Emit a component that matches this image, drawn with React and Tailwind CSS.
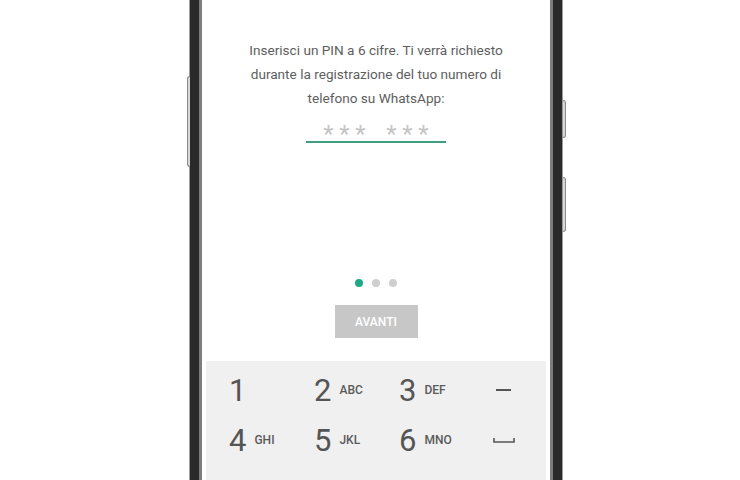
import React from 'react';

const keys = [
  { d: '1', l: '' },
  { d: '2', l: 'ABC' },
  { d: '3', l: 'DEF' },
  { special: 'dash' },
  { d: '4', l: 'GHI' },
  { d: '5', l: 'JKL' },
  { d: '6', l: 'MNO' },
  { special: 'space' },
];

function Key({ k }) {
  if (k.special === 'dash') {
    return (
      <div className="flex h-[50px] items-center justify-center">
        <span className="block h-[2px] w-[15px] bg-[#555]" />
      </div>
    );
  }
  if (k.special === 'space') {
    return (
      <div className="flex h-[50px] items-center justify-center">
        <svg width="22" height="6" viewBox="0 0 22 6" fill="none">
          <path d="M1 1v4h20V1" stroke="#555" strokeWidth="1.6" />
        </svg>
      </div>
    );
  }
  return (
    <div className="flex h-[50px] items-center gap-[8px] pl-[23px]">
      <span className="text-[31px] leading-none text-[#555]">{k.d}</span>
      {k.l && <span className="text-[12px] font-medium leading-none text-[#5a5a5a]">{k.l}</span>}
    </div>
  );
}

function Stars() {
  return (
    <div className="flex">
      <span className="w-[16px] text-center">*</span>
      <span className="w-[16px] text-center">*</span>
      <span className="w-[16px] text-center">*</span>
    </div>
  );
}

export default function App() {
  return (
    <div
      className="relative h-[480px] w-[740px] overflow-hidden bg-white"
      style={{ fontFamily: 'Roboto, "Noto Sans", sans-serif' }}
    >
      <div className="flex h-full pl-[189px]">
        {/* phone */}
        <div className="relative flex h-full w-[374px] border-x border-[#9c9c9c] bg-[#2a2a2a] px-[9px]">
          {/* side buttons */}
          <span className="absolute left-[-3px] top-[76px] h-[91px] w-[3px] rounded-l-sm border border-r-0 border-[#8a8a8a] bg-[#d8d8d8]" />
          <span className="absolute right-[-4px] top-[100px] h-[38px] w-[3px] rounded-r-sm border border-l-0 border-[#8a8a8a] bg-[#d8d8d8]" />
          <span className="absolute right-[-4px] top-[177px] h-[55px] w-[3px] rounded-r-sm border border-l-0 border-[#8a8a8a] bg-[#d8d8d8]" />

          <div className="flex flex-1 border-x-[3px] border-x-[#7d7d7d]">
            {/* screen */}
            <div className="flex flex-1 flex-col bg-white">
              <p className="pt-[38px] text-center text-[13.6px] leading-[24px] text-[#5e5e5e]">
                Inserisci un PIN a 6 cifre. Ti verrà richiesto
                <br />
                durante la registrazione del tuo numero di
                <br />
                telefono su WhatsApp:
              </p>

              <div className="mx-auto mt-[9px] flex w-[140px] flex-col items-center">
                <div className="flex h-[22px] items-start gap-[15px] text-[24px] leading-[31px] text-[#c4c4c4]">
                  <Stars />
                  <Stars />
                </div>
                <div className="h-[2px] w-full bg-[#3f9e80]" />
              </div>

              <div className="mt-[136px] flex justify-center gap-[9px]">
                <span className="h-[8px] w-[8px] rounded-full bg-[#1fa886]" />
                <span className="h-[8px] w-[8px] rounded-full bg-[#cfcfcf]" />
                <span className="h-[8px] w-[8px] rounded-full bg-[#cfcfcf]" />
              </div>

              <div className="mt-[18px] flex justify-center">
                <button className="h-[33px] w-[83px] bg-[#c7c7c7] text-[12px] font-medium text-white">
                  AVANTI
                </button>
              </div>

              <div className="mt-[23px] flex-1 px-[4px]">
                <div className="grid h-full grid-cols-4 content-start bg-[#f0f0f0] pt-[4px]">
                  {keys.map((k, i) => (
                    <Key key={i} k={k} />
                  ))}
                </div>
              </div>
            </div>
          </div>
        </div>
      </div>
    </div>
  );
}
